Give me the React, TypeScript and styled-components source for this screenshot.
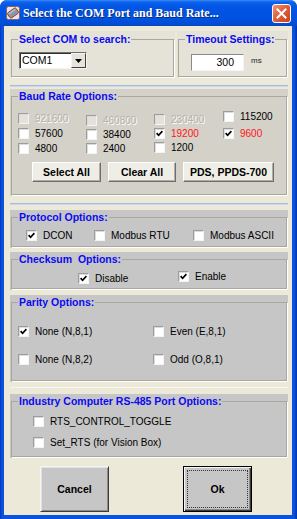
import React from "react";
import styled, { createGlobalStyle } from "styled-components";

const GlobalStyle = createGlobalStyle`
  html, body { margin: 0; padding: 0; background: #ffffff; }
  body { font-family: "Liberation Sans", Arial, sans-serif; }
  *, *::before, *::after { box-sizing: border-box; }
`;

type Tone = "normal" | "red" | "disabled";

const Window = styled.div`
  width: 297px;
  height: 519px;
  display: flex;
  flex-direction: column;
  background: linear-gradient(to right, #0839b8 0px, #0a52e0 2px, #0a52e0 294px, #0632a8 297px);
  border-radius: 7px 7px 0 0;
  overflow: hidden;
`;

const TitleBar = styled.div`
  height: 26px;
  flex: none;
  display: flex;
  align-items: center;
  gap: 3px;
  padding: 0 6px;
  background: linear-gradient(
    to bottom,
    #3d8df5 0px,
    #0a63ee 2px,
    #0457e6 6px,
    #0053e2 14px,
    #0050dc 22px,
    #0747c4 26px
  );
`;

const TitleText = styled.div`
  flex: 1;
  color: #ffffff;
  font: bold 12px/14px "Liberation Serif", "Times New Roman", serif;
  text-shadow: 1px 1px 0 #0b2a78;
  white-space: nowrap;
`;

const CloseButton = styled.div`
  width: 19px;
  height: 19px;
  flex: none;
  border: 1px solid #ffffff;
  border-radius: 3px;
  background: linear-gradient(135deg, #f29478 0%, #e0603c 45%, #c8401a 100%);
  display: flex;
  align-items: center;
  justify-content: center;
  margin-top: 1px;
`;

const Body = styled.div`
  flex: 1;
  margin: 0 5px 4px 4px;
  background: #ece9d8;
  padding: 5px 4px 3px 6px;
  display: flex;
  flex-direction: column;
`;

const TopRow = styled.div`
  display: flex;
  gap: 2px;
  height: 47px;
  flex: none;
`;

const Panel = styled.div<{ $h: number; $w?: number; $mt?: number; $bg: string; $pt: number }>`
  height: ${(p) => p.$h}px;
  width: ${(p) => (p.$w ? `${p.$w}px` : "auto")};
  flex: none;
  margin-top: ${(p) => p.$mt ?? 0}px;
  background: ${(p) => p.$bg};
  padding: ${(p) => p.$pt}px 1px 1px 1px;
  display: flex;
  flex-direction: column;
`;

const Group = styled.fieldset`
  flex: 1;
  margin: 0;
  padding: 0;
  min-width: 0;
  min-height: 0;
  border: 1px solid #a9a8a0;
  box-shadow: 1px 1px 0 #ffffff;
`;

const Legend = styled.legend`
  margin-left: 6px;
  padding: 0 1px;
  font: bold 10.5px/12px "Liberation Sans", Arial, sans-serif;
  color: #0a0af2;
  white-space: nowrap;
`;

const Separator = styled.div<{ $mt: number }>`
  height: 2px;
  flex: none;
  margin-top: ${(p) => p.$mt}px;
  border-top: 1px solid #a3bbe6;
  border-bottom: 1px solid #c9d7ef;
`;

const FaintLine = styled.div<{ $mt: number }>`
  height: 1px;
  flex: none;
  margin-top: ${(p) => p.$mt}px;
  background: #f8f7f1;
`;

/* ---------- top row controls ---------- */

const ComboWrap = styled.div`
  padding: 7px 0 0 7px;
`;

const Combo = styled.div`
  width: 68px;
  height: 17px;
  display: flex;
  background: #ffffff;
  border: 1px solid;
  border-color: #6f6f6f #f4f4f4 #f4f4f4 #6f6f6f;
  box-shadow: inset 1px 1px 0 #303030;
`;

const ComboText = styled.div`
  flex: 1;
  font-size: 10.5px;
  line-height: 15px;
  padding-left: 2px;
  color: #000;
`;

const ComboArrow = styled.div`
  width: 15px;
  height: 15px;
  background: #e6e3da;
  border: 1px solid;
  border-color: #f4f4f4 #404040 #404040 #f4f4f4;
  display: flex;
  align-items: center;
  justify-content: center;
`;

const TimeoutRow = styled.div`
  display: flex;
  align-items: flex-start;
  gap: 7px;
  padding: 9px 0 0 12px;
`;

const NumberField = styled.div`
  width: 53px;
  height: 17px;
  background: #ffffff;
  border: 1px solid;
  border-color: #8a8a8a #f4f4f4 #f4f4f4 #8a8a8a;
  font-size: 10.5px;
  line-height: 15px;
  text-align: right;
  padding-right: 9px;
  color: #000;
`;

const Unit = styled.span`
  font-size: 8px;
  line-height: 10px;
  margin-top: 2px;
  color: #222;
`;

/* ---------- check boxes ---------- */

const Item = styled.div<{ $mt?: number }>`
  display: flex;
  align-items: center;
  gap: 6px;
  height: 11px;
  margin-top: ${(p) => p.$mt ?? 0}px;
  white-space: nowrap;
`;

const Box = styled.span<{ $off?: boolean }>`
  width: 11px;
  height: 11px;
  flex: none;
  display: flex;
  align-items: center;
  justify-content: center;
  background: ${(p) => (p.$off ? "#e3e1d9" : "#ffffff")};
  border: 1px solid;
  border-color: #9c9c9c #f4f4f4 #f4f4f4 #9c9c9c;
  box-shadow: inset 1px 1px 0 #dcdcdc;
`;

const Label = styled.span<{ $tone: Tone }>`
  font-size: 10px;
  line-height: 11px;
  color: ${(p) => (p.$tone === "red" ? "#ff1414" : p.$tone === "disabled" ? "#b3b1a7" : "#000000")};
  text-shadow: ${(p) => (p.$tone === "disabled" ? "1px 1px 0 #ffffff" : "none")};
`;

const Tick = () => (
  <svg width="7" height="7" viewBox="0 0 7 7">
    <path d="M0.6 3.2 L2.6 5.3 L6.4 1.2" fill="none" stroke="#000" strokeWidth="1.7" />
  </svg>
);

function Check({
  label,
  checked,
  tone = "normal",
  mt,
}: {
  label: string;
  checked?: boolean;
  tone?: Tone;
  mt?: number;
}) {
  return (
    <Item $mt={mt}>
      <Box $off={tone === "disabled"}>{checked && <Tick />}</Box>
      <Label $tone={tone}>{label}</Label>
    </Item>
  );
}

/* ---------- baud ---------- */

const BaudGrid = styled.div`
  display: grid;
  grid-template-columns: 68px 68px 69px 1fr;
  align-items: start;
  padding-left: 6px;
`;

const BaudCol = styled.div<{ $top: number; $gap: number }>`
  display: flex;
  flex-direction: column;
  padding-top: ${(p) => p.$top}px;
  gap: ${(p) => p.$gap}px;
`;

const ButtonRow = styled.div`
  display: flex;
  gap: 7px;
  margin-top: 8px;
  padding-left: 20px;
`;

const SmallButton = styled.div<{ $w: number }>`
  width: ${(p) => p.$w}px;
  height: 20px;
  display: flex;
  align-items: center;
  justify-content: center;
  font: bold 10.5px "Liberation Sans", Arial, sans-serif;
  color: #000;
  background: #efeee6;
  border: 1px solid;
  border-color: #ffffff #6e6e6a #6e6e6a #ffffff;
  box-shadow: inset -1px -1px 0 #b0aea4;
`;

/* ---------- other groups ---------- */

const ProtoRow = styled.div`
  display: grid;
  grid-template-columns: 68px 99px 1fr;
  padding: 7px 0 0 14px;
`;

const ChecksumRow = styled.div`
  display: grid;
  grid-template-columns: 100px 1fr;
  align-items: start;
  padding-left: 66px;
`;

const ParityGrid = styled.div`
  display: grid;
  grid-template-columns: 135px 1fr;
  row-gap: 17px;
  padding: 18px 0 0 6px;
`;

const IndustryList = styled.div`
  display: flex;
  flex-direction: column;
  gap: 10px;
  padding: 9px 0 0 21px;
`;

const BottomRow = styled.div`
  display: flex;
  gap: 74px;
  margin-top: 8px;
  padding-left: 30px;
`;

const BigButton = styled.div<{ $default?: boolean }>`
  width: 69px;
  height: 46px;
  display: flex;
  padding: ${(p) => (p.$default ? "3px" : "0")};
  background: #c6c6c6;
  border: 1px solid;
  border-color: ${(p) => (p.$default ? "#000 #000 #000 #000" : "#f4f4f4 #3c3c3c #3c3c3c #f4f4f4")};
  box-shadow: ${(p) =>
    p.$default
      ? "inset 1px 1px 0 #f4f4f4, inset -1px -1px 0 #3c3c3c, inset -2px -2px 0 #8a8a8a"
      : "inset 1px 1px 0 #e2e2e2, inset -1px -1px 0 #8a8a8a"};
`;

const BigButtonFace = styled.div<{ $focus?: boolean }>`
  flex: 1;
  display: flex;
  align-items: center;
  justify-content: center;
  font: bold 10.5px "Liberation Sans", Arial, sans-serif;
  color: #000;
  border: 1px dotted ${(p) => (p.$focus ? "#333" : "transparent")};
`;

const GROUP_GREY = "#c6c6c6";

const baudCols: { top: number; gap: number; items: { l: string; c?: boolean; t?: Tone }[] }[] = [
  { top: 11, gap: 4, items: [{ l: "921600", t: "disabled" }, { l: "57600" }, { l: "4800" }] },
  { top: 13, gap: 3, items: [{ l: "460800", t: "disabled" }, { l: "38400" }, { l: "2400" }] },
  { top: 12, gap: 3, items: [{ l: "230400", t: "disabled" }, { l: "19200", c: true, t: "red" }, { l: "1200" }] },
  { top: 9, gap: 6, items: [{ l: "115200" }, { l: "9600", c: true, t: "red" }] },
];

export default function App() {
  return (
    <>
      <GlobalStyle />
      <Window>
        <TitleBar>
          <svg width="14" height="14" viewBox="0 0 14 14">
            <rect x="0.5" y="0.5" width="13" height="13" rx="2" fill="#e4e7ee" stroke="#9a5a5a" />
            <g transform="rotate(-35 7 7)">
              <rect x="1.8" y="3.8" width="10.4" height="6.4" rx="1.6" fill="#8e95a2" stroke="#7a3434" strokeWidth="0.8" />
              <rect x="3" y="4.6" width="8" height="1.4" fill="#b9bfca" />
            </g>
          </svg>
          <TitleText>Select the COM Port and Baud Rate...</TitleText>
          <CloseButton>
            <svg width="11" height="11" viewBox="0 0 11 11">
              <path d="M1.5 1.5 L9.5 9.5 M9.5 1.5 L1.5 9.5" stroke="#fff" strokeWidth="2" strokeLinecap="square" />
            </svg>
          </CloseButton>
        </TitleBar>
        <Body>
          <TopRow>
            <Panel $h={47} $w={165} $bg="#e5e2d7" $pt={2}>
              <Group>
                <Legend>Select COM to search:</Legend>
                <ComboWrap>
                  <Combo>
                    <ComboText>COM1</ComboText>
                    <ComboArrow>
                      <svg width="7" height="4" viewBox="0 0 7 4">
                        <path d="M0 0 H7 L3.5 4 Z" fill="#000" />
                      </svg>
                    </ComboArrow>
                  </Combo>
                </ComboWrap>
              </Group>
            </Panel>
            <Panel $h={47} $w={111} $bg="#e5e2d7" $pt={2}>
              <Group>
                <Legend>Timeout Settings:</Legend>
                <TimeoutRow>
                  <NumberField>300</NumberField>
                  <Unit>ms</Unit>
                </TimeoutRow>
              </Group>
            </Panel>
          </TopRow>

          <Separator $mt={7} />

          <Panel $h={107} $mt={2} $bg="#d4d1c9" $pt={1}>
            <Group>
              <Legend>Baud Rate Options:</Legend>
              <BaudGrid>
                {baudCols.map((col, i) => (
                  <BaudCol key={i} $top={col.top} $gap={col.gap}>
                    {col.items.map((it) => (
                      <Check key={it.l} label={it.l} checked={it.c} tone={it.t} />
                    ))}
                  </BaudCol>
                ))}
              </BaudGrid>
              <ButtonRow>
                <SmallButton $w={69}>Select All</SmallButton>
                <SmallButton $w={68}>Clear All</SmallButton>
                <SmallButton $w={91}>PDS, PPDS-700</SmallButton>
              </ButtonRow>
            </Group>
          </Panel>

          <Separator $mt={7} />

          <Panel $h={38} $mt={5} $bg={GROUP_GREY} $pt={1}>
            <Group>
              <Legend>Protocol Options:</Legend>
              <ProtoRow>
                <Check label="DCON" checked />
                <Check label="Modbus RTU" />
                <Check label="Modbus ASCII" />
              </ProtoRow>
            </Group>
          </Panel>

          <Panel $h={38} $mt={4} $bg={GROUP_GREY} $pt={1}>
            <Group>
              <Legend>Checksum&nbsp; Options:</Legend>
              <ChecksumRow>
                <Check label="Disable" checked mt={8} />
                <Check label="Enable" checked mt={6} />
              </ChecksumRow>
            </Group>
          </Panel>

          <Panel $h={87} $mt={5} $bg={GROUP_GREY} $pt={1}>
            <Group>
              <Legend>Parity Options:</Legend>
              <ParityGrid>
                <Check label="None (N,8,1)" checked />
                <Check label="Even (E,8,1)" />
                <Check label="None (N,8,2)" />
                <Check label="Odd (O,8,1)" />
              </ParityGrid>
            </Group>
          </Panel>

          <FaintLine $mt={5} />

          <Panel $h={64} $mt={6} $bg={GROUP_GREY} $pt={1}>
            <Group>
              <Legend>Industry Computer RS-485 Port Options:</Legend>
              <IndustryList>
                <Check label="RTS_CONTROL_TOGGLE" />
                <Check label="Set_RTS (for Vision Box)" />
              </IndustryList>
            </Group>
          </Panel>

          <BottomRow>
            <BigButton>
              <BigButtonFace>Cancel</BigButtonFace>
            </BigButton>
            <BigButton $default>
              <BigButtonFace $focus>Ok</BigButtonFace>
            </BigButton>
          </BottomRow>
        </Body>
      </Window>
    </>
  );
}
